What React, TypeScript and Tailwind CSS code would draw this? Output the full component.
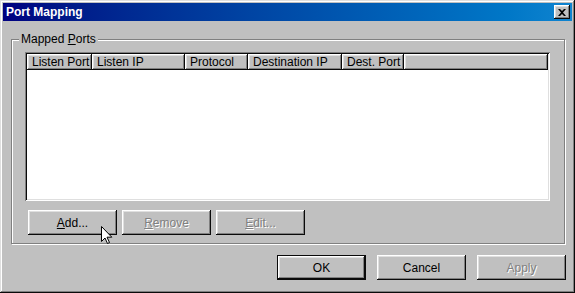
import React from "react";

const raised =
  "shadow-[inset_-1px_-1px_#0a0a0a,inset_1px_1px_#ffffff,inset_-2px_-2px_#808080,inset_2px_2px_#dfdfdf]";

const columns = [
  { title: "Listen Port", w: "w-[65px]" },
  { title: "Listen IP", w: "w-[93px]" },
  { title: "Protocol", w: "w-[63px]" },
  { title: "Destination IP", w: "w-[94px]" },
  { title: "Dest. Port", w: "w-[62px]" },
];

function Button({
  children,
  disabled,
  isDefault,
  className = "",
}: {
  children: React.ReactNode;
  disabled?: boolean;
  isDefault?: boolean;
  className?: string;
}) {
  const border = isDefault
    ? "shadow-[inset_0_0_0_1px_#0a0a0a,inset_-2px_-2px_#0a0a0a,inset_2px_2px_#ffffff,inset_-3px_-3px_#808080,inset_3px_3px_#dfdfdf]"
    : raised;
  return (
    <div
      className={`h-[25px] flex items-center justify-center bg-[#c0c0c0] ${border} ${
        disabled ? "text-[#808080] [text-shadow:1px_1px_0_#ffffff]" : "text-black"
      } ${className}`}
    >
      {children}
    </div>
  );
}

export default function App() {
  return (
    <div
      className="relative w-[575px] h-[293px] bg-[#c0c0c0] p-[3px] flex flex-col text-[12px] leading-none shadow-[inset_-1px_-1px_#0a0a0a,inset_1px_1px_#dfdfdf,inset_-2px_-2px_#808080,inset_2px_2px_#ffffff]"
      style={{ fontFamily: '"Liberation Sans", Arial, sans-serif' }}
    >
      {/* Title bar */}
      <div className="h-[18px] shrink-0 flex items-center justify-between pl-[3px] pr-[2px] bg-gradient-to-r from-[#000080] to-[#1084d0]">
        <span className="text-white font-bold text-[12px]">Port Mapping</span>
        <div className={`w-[16px] h-[14px] flex items-center justify-center bg-[#c0c0c0] ${raised}`}>
          <svg width="8" height="7" viewBox="0 0 8 7" aria-hidden="true">
            <path d="M0 0h2l2 2 2-2h2L5 3.5 8 7H6L4 5 2 7H0l3-3.5z" fill="#000" />
          </svg>
        </div>
      </div>

      {/* Group box */}
      <div className="relative mt-[18px] ml-[8px] w-[554px] h-[205px] border border-[#808080] shadow-[inset_1px_1px_#ffffff,1px_1px_#ffffff] pt-[12px] pl-[13px]">
        <span className="absolute -top-[7px] left-[7px] bg-[#c0c0c0] px-[2px]">
          Mapped <u className="underline-offset-1">P</u>orts
        </span>

        {/* List view */}
        <div className="w-[525px] h-[149px] bg-white p-[2px] shadow-[inset_1px_1px_#808080,inset_-1px_-1px_#ffffff,inset_2px_2px_#0a0a0a,inset_-2px_-2px_#dfdfdf]">
          <div className="flex h-[16px]">
            {columns.map((c) => (
              <div
                key={c.title}
                className={`${c.w} shrink-0 bg-[#c0c0c0] flex items-center pl-[5px] ${raised}`}
              >
                {c.title}
              </div>
            ))}
            <div className={`flex-1 bg-[#c0c0c0] ${raised}`} />
          </div>
        </div>

        <div className="flex gap-[5px] mt-[9px] ml-[3px]">
          <Button className="w-[89px]">
            <span>
              <u className="underline-offset-1">A</u>dd...
            </span>
          </Button>
          <Button className="w-[89px]" disabled>
            <span>
              <u className="underline-offset-1">R</u>emove
            </span>
          </Button>
          <Button className="w-[89px]" disabled>
            <span>
              <u className="underline-offset-1">E</u>dit...
            </span>
          </Button>
        </div>
      </div>

      {/* Dialog buttons */}
      <div className="flex justify-end gap-[11px] mt-[11px] mr-[6px]">
        <Button className="w-[89px]" isDefault>
          OK
        </Button>
        <Button className="w-[89px]">Cancel</Button>
        <Button className="w-[89px]" disabled>
          Apply
        </Button>
      </div>

      {/* Mouse pointer */}
      <svg
        className="absolute left-[101px] top-[226px]"
        width="12"
        height="19"
        viewBox="0 0 12 19"
        aria-hidden="true"
      >
        <path
          d="M0.5 0.5V15.5L4 12L6.5 17.5L8.5 16.5L6 11.2H10.8Z"
          fill="#fff"
          stroke="#000"
          strokeWidth="1"
          strokeLinejoin="miter"
        />
      </svg>
    </div>
  );
}
